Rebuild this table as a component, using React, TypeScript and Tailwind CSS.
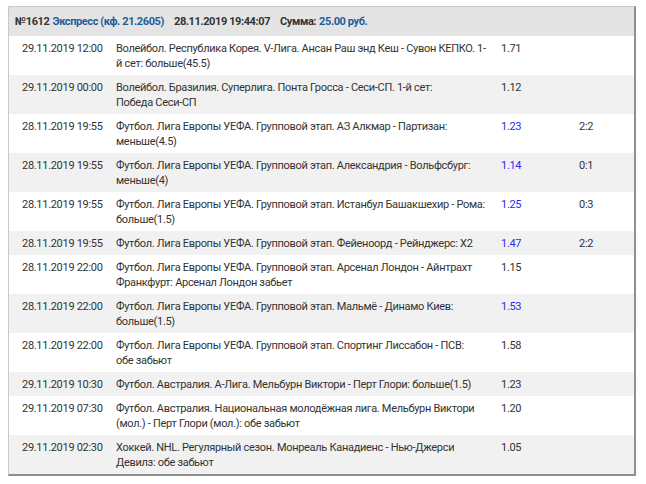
import React from "react";

type Row = { date: string; ev: string; out: string; coef: string; blue?: boolean; score?: string };

const rows: Row[] = [
  { date: "29.11.2019 12:00", ev: "Волейбол. Республика Корея. V-Лига. Ансан Раш энд Кеш - Сувон КЕПКО. 1-й сет:", out: "больше(45.5)", coef: "1.71" },
  { date: "29.11.2019 00:00", ev: "Волейбол. Бразилия. Суперлига. Понта Гросса - Сеси-СП. 1-й сет:", out: "Победа Сеси-СП", coef: "1.12" },
  { date: "28.11.2019 19:55", ev: "Футбол. Лига Европы УЕФА. Групповой этап. АЗ Алкмар - Партизан:", out: "меньше(4.5)", coef: "1.23", blue: true, score: "2:2" },
  { date: "28.11.2019 19:55", ev: "Футбол. Лига Европы УЕФА. Групповой этап. Александрия - Вольфсбург:", out: "меньше(4)", coef: "1.14", blue: true, score: "0:1" },
  { date: "28.11.2019 19:55", ev: "Футбол. Лига Европы УЕФА. Групповой этап. Истанбул Башакшехир - Рома:", out: "больше(1.5)", coef: "1.25", blue: true, score: "0:3" },
  { date: "28.11.2019 19:55", ev: "Футбол. Лига Европы УЕФА. Групповой этап. Фейеноорд - Рейнджерс:", out: "X2", coef: "1.47", blue: true, score: "2:2" },
  { date: "28.11.2019 22:00", ev: "Футбол. Лига Европы УЕФА. Групповой этап. Арсенал Лондон - Айнтрахт Франкфурт:", out: "Арсенал Лондон забьет", coef: "1.15" },
  { date: "28.11.2019 22:00", ev: "Футбол. Лига Европы УЕФА. Групповой этап. Мальмё - Динамо Киев:", out: "больше(1.5)", coef: "1.53", blue: true },
  { date: "28.11.2019 22:00", ev: "Футбол. Лига Европы УЕФА. Групповой этап. Спортинг Лиссабон - ПСВ:", out: "обе забьют", coef: "1.58" },
  { date: "29.11.2019 10:30", ev: "Футбол. Австралия. А-Лига. Мельбурн Виктори - Перт Глори:", out: "больше(1.5)", coef: "1.23" },
  { date: "29.11.2019 07:30", ev: "Футбол. Австралия. Национальная молодёжная лига. Мельбурн Виктори (мол.) - Перт Глори (мол.):", out: "обе забьют", coef: "1.20" },
  { date: "29.11.2019 02:30", ev: "Хоккей. NHL. Регулярный сезон. Монреаль Канадиенс - Нью-Джерси Девилз:", out: "обе забьют", coef: "1.05" },
];

export default function App() {
  return (
    <div
      className="w-[646px] h-[484px] bg-white overflow-hidden pt-[6px] pl-[8px] text-[#333] text-[11px] leading-[15px] tracking-[-0.3px]"
      style={{ fontFamily: "Roboto, 'Liberation Sans', sans-serif" }}
    >
      <div className="w-[628px] border-l border-t border-[#c8c8c8] border-r-2 border-b-2 border-r-[#8f8f8f] border-b-[#8f8f8f] bg-white">
        <div className="h-[29px] bg-[#e4e4e4] flex items-center pl-[6px] font-bold whitespace-nowrap tracking-[-0.4px]">
          <span>№1612</span>
          <span className="ml-[3px] text-[#1f5d99]">Экспресс (кф. 21.2605)</span>
          <span className="ml-[10px]">28.11.2019 19:44:07</span>
          <span className="ml-[10px]">Сумма:</span>
          <span className="ml-[3px] text-[#1f5d99]">25.00 руб.</span>
        </div>
        {rows.map((r, i) => (
          <div
            key={i}
            className={`grid grid-cols-[107px_385px_78px_1fr] py-[4.5px] ${i % 2 === 0 ? "bg-white" : "bg-[#f1f1f1]"}`}
          >
            <div className="pl-[13px] whitespace-nowrap">{r.date}</div>
            <div className="pr-[13px]">
              {r.ev} <span className="whitespace-nowrap">{r.out}</span>
            </div>
            <div className={r.blue ? "text-[#2b2bf0]" : ""}>{r.coef}</div>
            <div>{r.score ?? ""}</div>
          </div>
        ))}
      </div>
      <div className="mt-[8px] w-[628px] h-[20px] border-l border-t border-[#c8c8c8] border-r-2 border-r-[#8f8f8f]" />
    </div>
  );
}
